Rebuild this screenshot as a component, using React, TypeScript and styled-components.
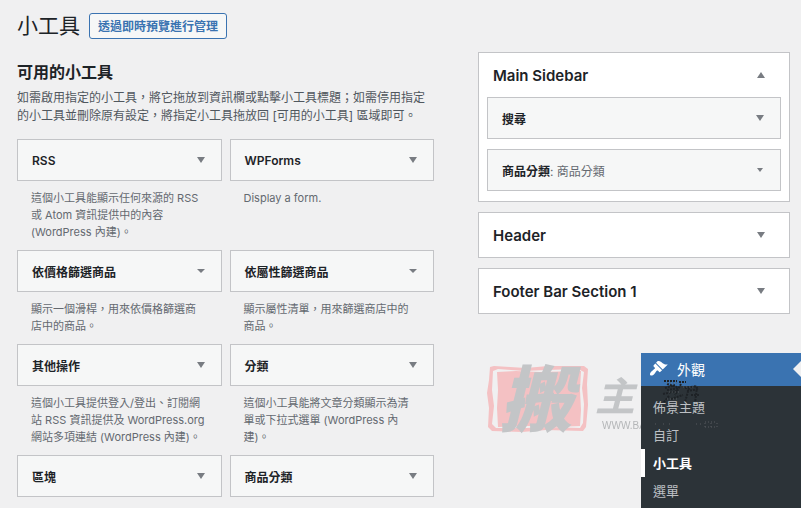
import React from "react";
import styled, { createGlobalStyle, css } from "styled-components";

const Global = createGlobalStyle`
  * { box-sizing: border-box; }
  body {
    margin: 0;
    background: #f0f0f1;
    color: #1d2327;
    font-family: Inter, "Noto Sans CJK TC", sans-serif;
    font-size: 12px;
  }
  h1, h2, h3, p, ul { margin: 0; padding: 0; }
`;

const Page = styled.div`
  display: grid;
  grid-template-columns: minmax(0, 417fr) minmax(0, 312fr);
  column-gap: 44px;
  height: 100vh;
  overflow: hidden;
  padding: 12px 11px 0 17px;
`;

const Column = styled.main`
  min-width: 0;
`;

const Heading = styled.header`
  display: flex;
  align-items: center;
  gap: 9px;
  height: 28px;
`;

const Title = styled.h1`
  font-size: 21px;
  font-weight: 400;
  line-height: 28px;
`;

const PreviewLink = styled.a`
  height: 26px;
  padding: 0 8px;
  border: 1px solid #3a73b1;
  border-radius: 3px;
  background: #f6f7f7;
  color: #3a73b1;
  font-size: 12px;
  font-weight: 600;
  line-height: 25px;
  text-decoration: none;
`;

const SectionTitle = styled.h2`
  margin-top: 21px;
  font-size: 16px;
  font-weight: 600;
  line-height: 22px;
`;

const Intro = styled.p`
  margin: 6px 0 14px;
  color: #50575e;
  line-height: 18px;
`;

const WidgetGrid = styled.div`
  display: grid;
  grid-template-columns: 1fr 1fr;
  column-gap: 8px;
`;

const WidgetBar = styled.button`
  display: flex;
  align-items: center;
  justify-content: space-between;
  width: 100%;
  height: 42px;
  padding: 0 16px 0 14px;
  border: 1px solid #c3c4c7;
  background: #f6f7f7;
  color: #1d2327;
  font: inherit;
  font-weight: 600;
  text-align: left;
`;

const WidgetNote = styled.p`
  padding: 9px 15px 9px 14px;
  color: #646970;
  font-size: 11px;
  line-height: 17px;
`;

const Areas = styled.aside`
  display: flex;
  flex-direction: column;
  gap: 10px;
  min-width: 0;
  padding-top: 40px;
`;

const Area = styled.section<{ $open?: boolean }>`
  border: 1px solid #c3c4c7;
  background: #fff;
  ${(p) =>
    p.$open &&
    css`
      padding-bottom: 10px;
    `}
`;

const AreaTitle = styled.button`
  display: flex;
  align-items: center;
  justify-content: space-between;
  width: 100%;
  height: 44px;
  padding: 0 24px 0 14px;
  border: 0;
  background: none;
  color: #1d2327;
  font: inherit;
  font-size: 15px;
  font-weight: 600;
`;

const AreaList = styled.div`
  display: grid;
  gap: 10px;
  padding: 0 8px;
`;

const Instance = styled.span`
  color: #646970;
  font-weight: 400;
`;

const Arrow = styled.svg`
  flex: none;
  width: 8px;
  height: 6px;
  fill: #787c82;
`;

type CaretKind = "down" | "up" | "flat" | "small";

const caretPaths: Record<CaretKind, string> = {
  down: "M0 0H8L4 6Z",
  up: "M0 6L4 0L8 6Z",
  flat: "M0 1H8L4 5Z",
  small: "M1 1H7L4 5Z",
};

const Caret = ({ kind = "down" }: { kind?: CaretKind }) => (
  <Arrow viewBox="0 0 8 6" aria-hidden="true">
    <path d={caretPaths[kind]} />
  </Arrow>
);

const Brand = styled.svg`
  position: fixed;
  right: 71px;
  bottom: 70px;
  width: 244px;
  height: 78px;
  overflow: visible;
  font-family: "Noto Sans CJK TC", sans-serif;
`;

const Menu = styled.nav`
  position: fixed;
  right: 0;
  bottom: 0;
  width: 160px;
  height: 155px;
  background: #2c3338;
  color: #bdc0c4;
`;

const MenuHead = styled.a`
  position: relative;
  display: flex;
  align-items: center;
  gap: 9px;
  height: 33px;
  padding: 0 0 2px 8px;
  background: #3a73b1;
  color: #fff;
  font-size: 14px;
  text-decoration: none;
  &::after {
    content: "";
    position: absolute;
    right: 0;
    border: 8px solid transparent;
    border-left: 0;
    border-right-color: #f0f0f1;
  }
`;

const MenuList = styled.ul`
  position: relative;
  padding-top: 7px;
  list-style: none;
`;

const MenuLink = styled.a<{ $current?: boolean }>`
  display: block;
  height: 28px;
  padding-left: 8px;
  border-left: 4px solid ${(p) => (p.$current ? "#fff" : "transparent")};
  color: ${(p) => (p.$current ? "#fff" : "inherit")};
  font-size: 13px;
  font-weight: ${(p) => (p.$current ? 600 : 400)};
  line-height: 28px;
  text-decoration: none;
`;

const MenuBrand = styled.svg`
  position: absolute;
  top: 22px;
  left: 0;
  width: 92px;
  height: 60px;
  pointer-events: none;
`;

const widgets: { name: string; note?: string; caret?: CaretKind }[] = [
  { name: "RSS", note: "這個小工具能顯示任何來源的 RSS 或 Atom 資訊提供中的內容 (WordPress 內建)。" },
  { name: "WPForms", note: "Display a form." },
  { name: "依價格篩選商品", note: "顯示一個滑桿，用來依價格篩選商店中的商品。", caret: "flat" },
  { name: "依屬性篩選商品", note: "顯示屬性清單，用來篩選商店中的商品。", caret: "flat" },
  { name: "其他操作", note: "這個小工具提供登入/登出、訂閱網站 RSS 資訊提供及 WordPress.org 網站多項連結 (WordPress 內建)。" },
  { name: "分類", note: "這個小工具能將文章分類顯示為清單或下拉式選單 (WordPress 內建)。" },
  { name: "區塊" },
  { name: "商品分類" },
];

export default function App() {
  return (
    <>
      <Global />
      <Page>
        <Column>
          <Heading>
            <Title>小工具</Title>
            <PreviewLink href="#preview">透過即時預覽進行管理</PreviewLink>
          </Heading>
          <SectionTitle>可用的小工具</SectionTitle>
          <Intro>
            如需啟用指定的小工具，將它拖放到資訊欄或點擊小工具標題；如需停用指定的小工具並刪除原有設定，將指定小工具拖放回 [可用的小工具] 區域即可。
          </Intro>
          <WidgetGrid>
            {widgets.map((w) => (
              <div key={w.name}>
                <WidgetBar type="button">
                  {w.name}
                  <Caret kind={w.caret} />
                </WidgetBar>
                {w.note && <WidgetNote>{w.note}</WidgetNote>}
              </div>
            ))}
          </WidgetGrid>
        </Column>
        <Areas>
          <Area $open>
            <AreaTitle type="button" aria-expanded="true">
              Main Sidebar
              <Caret kind="up" />
            </AreaTitle>
            <AreaList>
              <WidgetBar type="button">
                搜尋
                <Caret />
              </WidgetBar>
              <WidgetBar type="button">
                <span>
                  商品分類<Instance>: 商品分類</Instance>
                </span>
                <Caret kind="small" />
              </WidgetBar>
            </AreaList>
          </Area>
          {["Header", "Footer Bar Section 1"].map((name) => (
            <Area key={name}>
              <AreaTitle type="button" aria-expanded="false">
                {name}
                <Caret />
              </AreaTitle>
            </Area>
          ))}
        </Areas>
      </Page>
      <Brand viewBox="0 0 244 78">
        <path
          d="M4 7L8 6L40 8L62 6L98 6L102 9L101 24L102 45L100 67L97 71L60 70L36 72L6 71L2 67L3 48L1 33L3 20Z M7 11L6 30L8 46L6 64L10 68L40 68L62 67L94 68L97 63L98 44L96 28L98 12L92 9L60 10L38 11L12 9Z"
          fill="#f4c1c3"
          fillRule="evenodd"
        />
        <path d="M11 12L30 11L54 12L95 11L94 30L95 50L94 66L70 67L42 66L12 67L11 48L12 30Z" fill="#f4c1c3" />
        <text x="14" y="66" fontSize="72" fontWeight="900" fontStyle="italic" fill="#c3c5c7">
          搬
        </text>
        <text x="109" y="51" fontSize="40" fontWeight="700" fontStyle="italic" fill="#c3c5c7">
          主
        </text>
        <text x="116" y="69" fontSize="10" fontFamily="Liberation Sans" fill="#b4b6b8">
          WWW.BA
        </text>
      </Brand>
      <Menu>
        <MenuHead href="#appearance">
          <svg width="19" height="19" viewBox="0 0 20 20" fill="#fff" aria-hidden="true">
            <path d="M14.48 11.06L7.41 3.99l1.5-1.5c.5-.56 2.3-.47 3.51.32 1.21.8 1.43 1.28 2.91 2.1 1.18.64 2.45 1.26 4.45.85zm-.71.71L6.7 4.7 4.93 6.47c-.39.39-.39 1.02 0 1.41l1.06 1.06c.39.39.39 1.03 0 1.42-.6.6-1.43 1.11-2.21 1.69-.35.26-.7.53-1.01.84C1.43 14.23.4 16.08 1.4 17.07c.99 1 2.84-.03 4.18-1.36.31-.31.58-.66.85-1.02.57-.78 1.08-1.61 1.69-2.21.39-.39 1.02-.39 1.41 0l1.06 1.06c.39.39 1.02.39 1.41 0z" />
          </svg>
          外觀
        </MenuHead>
        <MenuBrand viewBox="0 0 92 60" aria-hidden="true">
          <path
            d="M23 6H36M38 7H45M26 9L36 12M24 13L34 10M40 9L34 20M26 15L38 13M22 19L36 16M28 21L22 28M44 13L56 11M46 16L58 14M48 13L44 27M56 12L54 28M30 24L42 20M50 20H59"
            fill="none"
            stroke="#1e2226"
            strokeWidth="2"
            strokeDasharray="2 1"
          />
          <path
            d="M26 8H36M28 17H40M42 12H52M26 24H36M14 49H16M22 49H23M28 49H29M55 49H56M59 49H60M64 47H68M64 52H68M64 48V52M70 47H76M70 52H76M70 48V52M76 48V52"
            fill="none"
            stroke="#565b5f"
            strokeDasharray="1 2"
          />
        </MenuBrand>
        <MenuList>
          {["佈景主題", "自訂", "小工具", "選單"].map((name) => (
            <li key={name}>
              <MenuLink href="#" $current={name === "小工具"}>
                {name}
              </MenuLink>
            </li>
          ))}
        </MenuList>
      </Menu>
    </>
  );
}
